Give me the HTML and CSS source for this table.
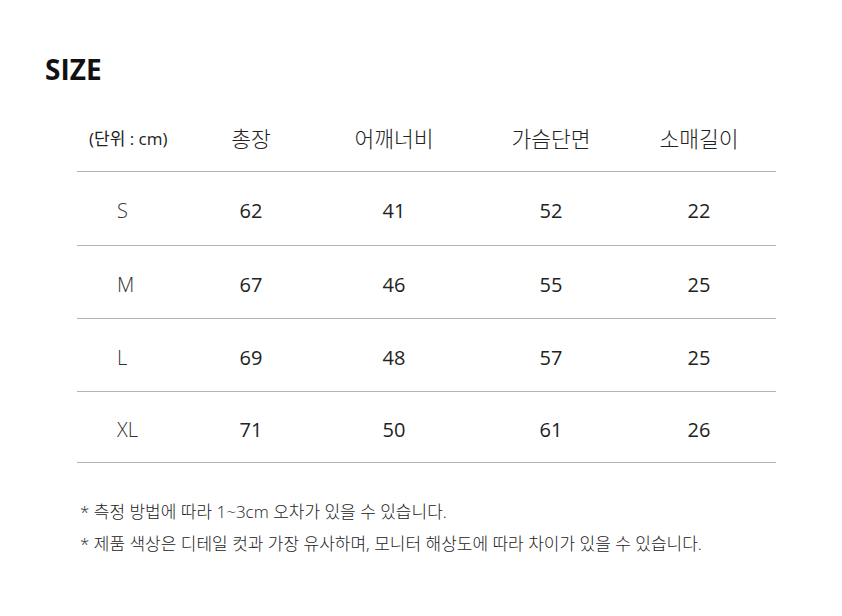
FILE: index.html
```html
<!DOCTYPE html>
<html lang="ko">
<head>
<meta charset="utf-8">
<link rel="stylesheet" href="styles.css">
</head>
<body>
<div class="page">
  <h1 class="title">SIZE</h1>
  <div class="table">
    <div class="row head">
      <div class="cell unit">(단위 : cm)</div>
      <div class="cell">총장</div>
      <div class="cell">어깨너비</div>
      <div class="cell">가슴단면</div>
      <div class="cell">소매길이</div>
      <div class="cell"></div>
    </div>
    <div class="row">
      <div class="cell size">S</div>
      <div class="cell">62</div>
      <div class="cell">41</div>
      <div class="cell">52</div>
      <div class="cell">22</div>
      <div class="cell"></div>
    </div>
    <div class="row">
      <div class="cell size">M</div>
      <div class="cell">67</div>
      <div class="cell">46</div>
      <div class="cell">55</div>
      <div class="cell">25</div>
      <div class="cell"></div>
    </div>
    <div class="row">
      <div class="cell size">L</div>
      <div class="cell">69</div>
      <div class="cell">48</div>
      <div class="cell">57</div>
      <div class="cell">25</div>
      <div class="cell"></div>
    </div>
    <div class="row last">
      <div class="cell size">XL</div>
      <div class="cell">71</div>
      <div class="cell">50</div>
      <div class="cell">61</div>
      <div class="cell">26</div>
      <div class="cell"></div>
    </div>
  </div>
  <div class="notes">
    <p>* 측정 방법에 따라 1~3cm 오차가 있을 수 있습니다.</p>
    <p>* 제품 색상은 디테일 컷과 가장 유사하며, 모니터 해상도에 따라 차이가 있을 수 있습니다.</p>
  </div>
</div>
</body>
</html>
```
FILE: styles.css
```css
html, body {
  margin: 0;
  padding: 0;
  background: #ffffff;
}
body {
  font-family: "Open Sans", "Noto Sans CJK KR", sans-serif;
  color: #222222;
}
.page {
  width: 842px;
  height: 616px;
  padding: 50px 0 0 0;
  box-sizing: border-box;
}
.title {
  margin: 0 0 0 45px;
  font-size: 28px;
  font-weight: 700;
  line-height: 38px;
  color: #111111;
}
.table {
  margin: 16px 0 0 77px;
  width: 699px;
}
.row {
  display: grid;
  grid-template-columns: 102px 144px 142px 172px 124px 1fr;
  box-sizing: border-box;
  height: 73px;
  padding-top: 4px;
  border-bottom: 1px solid #b4b4b4;
  align-items: center;
}
.row.head {
  height: 68px;
  padding-top: 0;
}
.row.head + .row {
  height: 74px;
}
.row.last {
  height: 71px;
}
.cell {
  text-align: center;
  font-size: 20px;
  font-weight: 400;
  color: #222222;
}
.head .cell {
  font-weight: 300;
  font-size: 21.5px;
}
.head .cell.unit {
  font-size: 17px;
  font-weight: 400;
  text-align: left;
  padding-left: 12px;
}
.cell.size {
  font-weight: 300;
  color: #333333;
  text-align: left;
  padding-left: 40px;
}
.notes {
  margin: 33px 0 0 80px;
}
.notes p {
  margin: 0;
  font-size: 17px;
  line-height: 32px;
  font-weight: 300;
  color: #222222;
}
```
